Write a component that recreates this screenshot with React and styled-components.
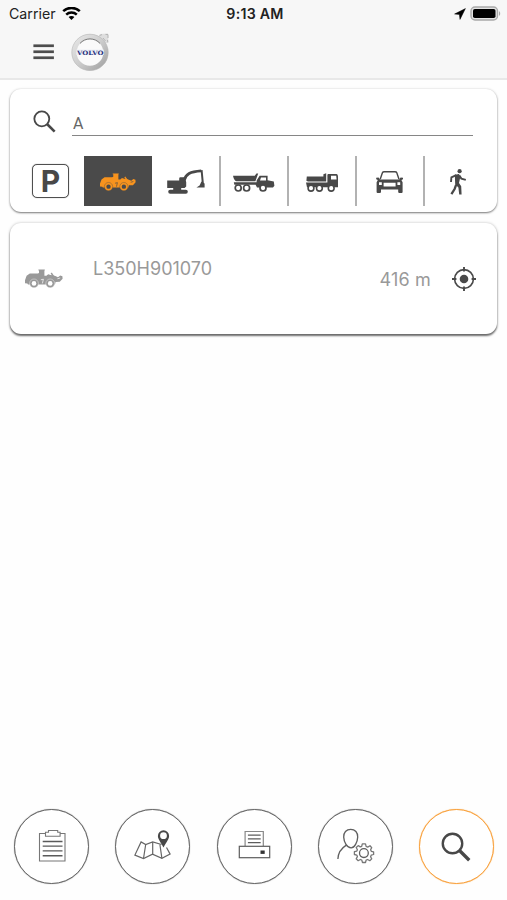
import React, { useState } from 'react';
import styled, { createGlobalStyle } from 'styled-components';

const GlobalStyle = createGlobalStyle`
    * {
        box-sizing: border-box;
    }
    body {
        margin: 0;
        background: #fefefe;
        font-family: Inter, "Liberation Sans", sans-serif;
        color: #4a4a4a;
    }
    svg {
        display: block;
        flex: none;
    }
`

/* ---------- icons ---------- */

const WifiIcon = () => (
    <svg width="19" height="14" viewBox="0 0 19 14" fill="none" stroke="#000" strokeWidth="2.5">
        <path d="M1.2 4.2C5.8-.2 13.2-.2 17.8 4.2" />
        <path d="M4.2 7.6C7.2 4.8 11.8 4.8 14.8 7.6" />
        <path d="M9.5 13L6.6 10.1C8.2 8.6 10.8 8.6 12.4 10.1Z" fill="#000" stroke="none" />
    </svg>
)

const LocationIcon = () => (
    <svg width="12" height="12" viewBox="0 0 12 12" fill="#000">
        <path d="M11.4.6L.6 6L5.4 6.4L6 11.4Z" stroke="#000" strokeWidth=".5" />
    </svg>
)

const BatteryIcon = () => (
    <svg width="31" height="15" viewBox="0 0 31 15">
        <rect x="1" y="1" width="26.5" height="13" rx="4" fill="#e3e3e3" stroke="#a9a9a9" strokeWidth="1.4" />
        <rect x="3" y="3" width="22.5" height="9" rx="1.8" fill="#000" />
        <path d="M29 5.2C30.6 5.8 30.6 9.2 29 9.8Z" fill="#a9a9a9" />
    </svg>
)

const MenuIcon = () => (
    <svg width="21" height="17" viewBox="0 0 21 17" fill="#4d4d4d">
        <rect x=".4" y="1.4" width="20.5" height="2.7" />
        <rect x=".4" y="7.4" width="20.5" height="2.7" />
        <rect x=".4" y="13.4" width="20.5" height="2.7" />
    </svg>
)

const Logo = () => (
    <svg width="38" height="38" viewBox="0 0 38 38">
        <defs>
            <linearGradient id="ring" x1="0" y1="0" x2="1" y2="1">
                <stop offset="0" stopColor="#e6e6e6" />
                <stop offset="0.5" stopColor="#cdcdcd" />
                <stop offset="1" stopColor="#a2a2a2" />
            </linearGradient>
        </defs>
        <path d="M27 4L29 1L37 .6L37.4 9L34 11Z" fill="#dedede" />
        <path d="M28.6 2.5L31 1.6M34.5 1.4L37 1.6L37 5M32 5L34.5 8M36.5 7L36.8 9.5" stroke="#b5b5b5" strokeWidth="1" fill="none" />
        <circle cx="19" cy="19.4" r="15.8" fill="#fafafa" stroke="url(#ring)" strokeWidth="5" />
        <circle cx="19" cy="19.4" r="18.2" fill="none" stroke="#b9b9b9" strokeWidth=".6" />
        <path d="M9 10.4A13.4 13.4 0 0 1 29 10.4" fill="none" stroke="#777" strokeWidth="1" />
        <rect x="5.4" y="16.6" width="27.4" height="5.4" fill="#eceef4" />
        <text x="6" y="21.5" fontFamily="DejaVu Serif, serif" fontWeight="bold" fontSize="6" textLength="26.5" lengthAdjust="spacingAndGlyphs" fill="#252f7c">VOLVO</text>
    </svg>
)

const SearchIcon = ({ size, weight = 2.2 }) => (
    <svg width={size} height={size} viewBox="0 0 24 24" fill="none" stroke="#484848">
        <circle cx="9.2" cy="9.2" r="7.8" strokeWidth={weight} />
        <path d="M14.6 14.6L22.6 22.6" strokeWidth="2.7" />
    </svg>
)

const LoaderIcon = ({ width, color, wheel }) => (
    <svg width={width} height={width / 2} viewBox="0 0 38 19" fill={color}>
        <path d="M0 11.2L1.6 6.8L4.8 4.4L12.8 4.6L14 4V1.4H13.4V.4H19.8V1.4H19.4V6.8H21.4L23.2 5.2L25.6 6L28 6.2L30.4 7L33 8.2L35.2 6.4L37.4 7.2L37.6 9.8L34.8 12.8L30.6 13L30 15.4H3L2.4 14.6L0 14.2Z" />
        <path d="M26.2 4L28.4 7.2" fill="none" stroke={color} strokeWidth="1.4" />
        <path d="M15.8 10.8L18.4 10.2L17.4 14.4M32.4 9.8L35.2 9" fill="none" stroke={wheel} strokeWidth=".7" />
        <circle cx="9" cy="14.4" r="4.4" stroke={wheel} strokeWidth=".4" />
        <circle cx="9" cy="14.4" r="2.3" fill={wheel} />
        <circle cx="25.2" cy="14.4" r="4.4" stroke={wheel} strokeWidth=".4" />
        <circle cx="25.2" cy="14.4" r="2.3" fill={wheel} />
    </svg>
)

const ExcavatorIcon = () => (
    <svg width="39" height="26" viewBox=".8 0 39 26" fill="#484848">
        <path d="M1 11.5H13V9.5Q13 8.3 14.2 8.3H18.6L20 13V17.6L18.4 19H1Z" />
        <path d="M7 18H15V21.6H7Z" />
        <rect x="2" y="20.8" width="19.6" height="4" rx="2" />
        <path d="M18 11.4C19.4 4.8 24 2.6 35 1.8" fill="none" stroke="#484848" strokeWidth="2.8" />
        <path d="M35.4 1.2L36.6 14" fill="none" stroke="#484848" strokeWidth="2" />
        <path d="M35.2 12.6L38.4 14.4V18.4H30.2L33.4 16.4Z" />
    </svg>
)

const HaulerIcon = () => (
    <svg width="42" height="20" viewBox="0 -.6 42 20" fill="#484848">
        <path d="M0 3.2H21.8L23.4 .8H25.2L22.4 8.6H3.4Q1 8.2 0 3.2Z" />
        <path d="M.8 9.6H23.6V7.8L26.6 3.2H34.6V7.6L40.8 8.8L41.4 13.2L40 14.8H24L22.6 12.2H1.4Z" />
        <path d="M28 5H33V8H27Z" fill="#fff" />
        <g fill="#fff" stroke="#484848" strokeWidth="1.7">
            <circle cx="5.2" cy="15.4" r="3" />
            <circle cx="13.6" cy="15.4" r="3" />
            <circle cx="30" cy="15.4" r="3" />
        </g>
    </svg>
)

const DumpTruckIcon = () => (
    <svg width="33" height="20" viewBox="0 -.6 33 20" fill="#484848">
        <path d="M.8 4H17.4V1.6L20.2.6V8.8H2L.4 8.2Z" />
        <path d="M0 9.8H21.4V2.4Q21.4 1.4 22.4 1.4H30.6Q32 1.6 32 4V14.6H1Z" />
        <path d="M25 3.2H30.2L30.6 7H25Z" fill="#fff" />
        <g fill="#fff" stroke="#484848" strokeWidth="1.6">
            <circle cx="5" cy="15.6" r="2.9" />
            <circle cx="13.4" cy="15.6" r="2.9" />
            <circle cx="25.2" cy="15.6" r="2.9" />
        </g>
    </svg>
)

const CarIcon = () => (
    <svg width="28" height="23" viewBox=".4 .4 28 23">
        <path d="M4.6 8.6L6.8 2.2Q7.2 1.2 8.6 1.2H19.4Q20.8 1.2 21.2 2.2L23.4 8.6" fill="none" stroke="#484848" strokeWidth="1.4" />
        <path d="M.6 7.2L3 6.8L4.4 8.8H23.6L25 6.8L27.4 7.2V8.6L25.8 9.4L27 11.6V21.4Q27 22.4 26 22.4H23.6Q22.8 22.4 22.6 21.4V18.8H5.4V21.4Q5.2 22.4 4.4 22.4H2Q1 22.4 1 21.4V11.6L2.2 9.4L.6 8.6Z" fill="#484848" />
        <path d="M3.4 11.6H6.2V14.4H3.4ZM8 12.2H20V15.8H8ZM21.8 11.6H24.6V14.4H21.8Z" fill="#fff" />
    </svg>
)

const WalkIcon = () => (
    <svg width="17" height="27" viewBox=".8 .4 17 27" fill="none" stroke="#484848">
        <circle cx="10.4" cy="2.6" r="2.1" fill="#484848" stroke="none" />
        <path d="M5.6 6.2L9.8 5.4L11 9L9.8 14.4L12 17.6L12.4 26H10L9.2 19L6 15.6Z" fill="#484848" stroke="none" />
        <path d="M7 6.6L2.2 8.8L1.8 13.4" strokeWidth="1.9" />
        <path d="M10 6.8L12.2 10L16.6 11.2" strokeWidth="1.9" />
        <path d="M7 16L5.4 20.4L2.2 25.6" strokeWidth="2.3" />
    </svg>
)

const TargetIcon = () => (
    <svg width="26" height="26" viewBox="0 0 26 26" fill="none" stroke="#4a4a4a" strokeWidth="1.6">
        <circle cx="13" cy="13" r="9.4" />
        <circle cx="13" cy="13" r="4.3" fill="#4a4a4a" stroke="none" />
        <path d="M13 1V5.4M13 20.6V25M1 13H5.4M20.6 13H25" strokeWidth="1.9" />
    </svg>
)

const ClipboardIcon = () => (
    <svg width="75" height="75" viewBox="-.5 -.5 75 75" fill="none" stroke="#777" strokeWidth="1.1">
        <path d="M31 24H25V51.5H50.5V24H45.5" />
        <path d="M31 26.8V22.8H34V21H43.2V22.8H45.6V26.8Z" />
        <path d="M28.2 32H48M28.2 36.6H48M28.2 41.4H48M28.2 46.2H48" stroke="#5a5a5a" strokeWidth="1.4" />
    </svg>
)

const MapIcon = () => (
    <svg width="75" height="75" viewBox="-.5 -.5 75 75" fill="none" stroke="#666" strokeWidth="1.2">
        <path d="M46 35L37.2 32.4L30.2 35L25.6 32.4L19.4 45.6L28 49L37 44.6L46.4 48.8L54.6 44.6L51 38" />
        <path d="M30.2 35L28 49M37.2 32.4V44.6M44.4 35L46.4 48.8" />
        <path fillRule="evenodd" stroke="none" fill="#484848" d="M48 38C45 32 42.4 29.6 42.4 26.4A5.6 5.6 0 0 1 53.6 26.4C53.6 29.6 51 32 48 38ZM48 22.8A3.4 3.4 0 1 0 48 29.6A3.4 3.4 0 1 0 48 22.8Z" />
    </svg>
)

const PrinterIcon = () => (
    <svg width="75" height="75" viewBox="-.5 -.5 75 75" fill="none" stroke="#5c5c5c" strokeWidth="1.2">
        <path d="M28.6 36.6V22H46.8V36.6" stroke="#888" />
        <path d="M31.4 25.6H44.2M31.4 29.4H44.2M31.4 33.2H44.2" />
        <rect x="22.8" y="36.8" width="30.4" height="11.4" />
        <rect x="44" y="41" width="4.2" height="3.4" fill="#333" stroke="none" />
    </svg>
)

const UserGearIcon = () => (
    <svg width="75" height="75" viewBox="-.5 -.5 75 75" fill="none" stroke="#5f5f5f" strokeWidth="1.3">
        <path d="M33.2 19.8C37.6 19.8 40.4 23 40.2 27.6C40 32.6 37 38.4 33.6 38.4C29.6 38.4 26.4 32.6 26.2 27.6C26 23 28.8 19.8 33.2 19.8Z" />
        <path d="M28.8 35.6C24 38.6 20.6 43 20.4 49.6" />
        <circle cx="46.4" cy="43.6" r="4.4" />
        <path d="M44.8 34.4H48L48.6 36.9L50.2 37.6L52.5 36.2L54.2 38.1L53.1 40.2L53.8 41.8L56.1 42.3V45L53.7 45.7L53.1 47.2L54.2 49.4L52.3 51.2L50.1 50L48.6 50.6L48 53H45L44.3 50.6L42.8 50L40.7 51.2L38.7 49.3L39.9 47.1L39.3 45.6L36.9 45V42.2L39.3 41.6L39.9 40.2L38.7 38L40.7 36.1L42.8 37.4L44.2 36.8Z" stroke="#777" strokeLinejoin="round" />
    </svg>
)

//the vehicle filters shown next to the parking button
const filters = [
    { id: 'loader', icon: LoaderIcon },
    { id: 'excavator', icon: ExcavatorIcon },
    { id: 'hauler', icon: HaulerIcon },
    { id: 'truck', icon: DumpTruckIcon },
    { id: 'car', icon: CarIcon },
    { id: 'person', icon: WalkIcon },
];

const tabs = [
    { id: 'tasks', icon: <ClipboardIcon /> },
    { id: 'map', icon: <MapIcon /> },
    { id: 'print', icon: <PrinterIcon /> },
    { id: 'profile', icon: <UserGearIcon /> },
    { id: 'search', icon: <SearchIcon size={30} weight={1.9} /> },
];

export default function App() {
    const [query, setQuery] = useState('A');
    const [filter, setFilter] = useState('loader');
    const [tab, setTab] = useState('search');

    return (
        <Screen>
            <GlobalStyle />
            <Header>
                <StatusBar>
                    <Carrier>Carrier <WifiIcon /></Carrier>
                    <Time>9:13 AM</Time>
                    <StatusIcons><LocationIcon /><BatteryIcon /></StatusIcons>
                </StatusBar>
                <TitleBar>
                    <MenuIcon />
                    <Logo />
                </TitleBar>
            </Header>
            <Content>
                <SearchCard>
                    <SearchRow>
                        <SearchIcon size={23} weight={1.9} />
                        <SearchInput value={query} onChange={e => setQuery(e.target.value)} />
                    </SearchRow>
                    <FilterRow>
                        <Parking>P</Parking>
                        {filters.map(({ id, icon: Icon }) => {
                            const active = id === filter;
                            return (
                                <Filter key={id} $active={active} onClick={() => setFilter(id)}>
                                    {id === 'loader'
                                        ? <Icon width={36} color={active ? '#f7931e' : '#484848'} wheel={active ? '#4a4a4a' : '#fff'} />
                                        : <Icon />}
                                </Filter>
                            )
                        })}
                    </FilterRow>
                </SearchCard>
                <ResultCard>
                    <LoaderIcon width={38} color="#999" wheel="#fff" />
                    <ResultName>L350H901070</ResultName>
                    <Distance>416 m</Distance>
                    <TargetIcon />
                </ResultCard>
            </Content>
            <TabBar>
                {tabs.map(({ id, icon }) => (
                    <Tab key={id} $active={id === tab} onClick={() => setTab(id)}>{icon}</Tab>
                ))}
            </TabBar>
        </Screen>
    );
}

const Screen = styled.div`
    height: 900px;
    display: flex;
    flex-direction: column;
    overflow: hidden;
`

const Header = styled.header`
    height: 80px;
    background: #f7f7f7;
    border-bottom: 2px solid #e8e8e8;
`

const StatusBar = styled.div`
    height: 27px;
    padding: 0 6px 0 9px;
    display: grid;
    grid-template-columns: 1fr auto 1fr;
    align-items: center;
    font-size: 14.2px;
    color: #222;
`

const Carrier = styled.div`
    display: flex;
    align-items: center;
    gap: 6px;
`

const Time = styled.div`
    font-weight: 600;
    letter-spacing: 0.25px;
`

const StatusIcons = styled.div`
    display: flex;
    justify-content: flex-end;
    align-items: center;
    gap: 4px;
`

const TitleBar = styled.div`
    height: 49px;
    padding-left: 33px;
    display: flex;
    align-items: center;
    gap: 17px;
`

const Content = styled.main`
    flex: 1;
    padding: 9px 10px 0;
    display: flex;
    flex-direction: column;
    gap: 11px;
`

const Card = styled.section`
    background: #fff;
    border-radius: 11px;
`

const SearchCard = styled(Card)`
    height: 123px;
    padding: 21px 0 0 22px;
    box-shadow: 0 1px 2px 0 rgba(0,0,0,0.5), 0 0 3px rgba(0,0,0,0.1);
`

const SearchRow = styled.div`
    height: 26px;
    padding: 0 24px 0 1px;
    display: flex;
    gap: 16px;
`

const SearchInput = styled.input`
    flex: 1;
    min-width: 0;
    padding: 1px 0 0 1px;
    border: none;
    border-bottom: 1px solid #868686;
    border-radius: 0;
    outline: none;
    background: transparent;
    font: 16px Roboto, sans-serif;
    color: #666;
`

const FilterRow = styled.div`
    height: 50px;
    margin-top: 20px;
    display: flex;
    align-items: center;
`

const Parking = styled.button`
    width: 37px;
    height: 34px;
    margin-right: 15px;
    padding: 0;
    border: 1px solid #4f4f4f;
    border-radius: 5px;
    box-shadow: 0 0 1px #777;
    background: #fff;
    font: bold 30px/32px Inter, sans-serif;
    color: #484848;
`

const Filter = styled.button`
    width: 68px;
    height: 50px;
    padding: 2px 0 0;
    border: none;
    border-right: 2px solid #b2b2b2;
    background: ${props => props.$active ? '#4a4a4a' : 'transparent'} padding-box;
    display: flex;
    align-items: center;
    justify-content: center;
    &:nth-child(2) {
        width: 69px;
        border-right: 1px solid transparent;
    }
    &:last-child {
        border-right-color: transparent;
    }
`

const ResultCard = styled(Card)`
    height: 111px;
    padding: 0 20px 0 15px;
    display: flex;
    align-items: center;
    box-shadow: 0 2px 2px 0 rgba(0,0,0,0.55), 0 0 3px rgba(0,0,0,0.25);
`

const ResultName = styled.div`
    flex: 1;
    padding: 0 0 21px 30px;
    font-size: 18px;
    color: #999;
`

const Distance = styled.div`
    margin-right: 20px;
    padding-top: 2px;
    font-size: 18px;
    letter-spacing: 0.2px;
    color: #999;
`

const TabBar = styled.nav`
    height: 91px;
    padding: 0 13px 0 14px;
    display: flex;
    justify-content: space-between;
`

const Tab = styled.button`
    width: 75px;
    height: 75px;
    padding: 0 1px 0 0;
    border: 1px solid ${props => props.$active ? '#f9a13c' : '#666'};
    border-radius: 50%;
    box-shadow: 0 0 1px ${props => props.$active ? '#f9a13c' : '#777'};
    background: #fff;
    display: flex;
    align-items: center;
    justify-content: center;
`
